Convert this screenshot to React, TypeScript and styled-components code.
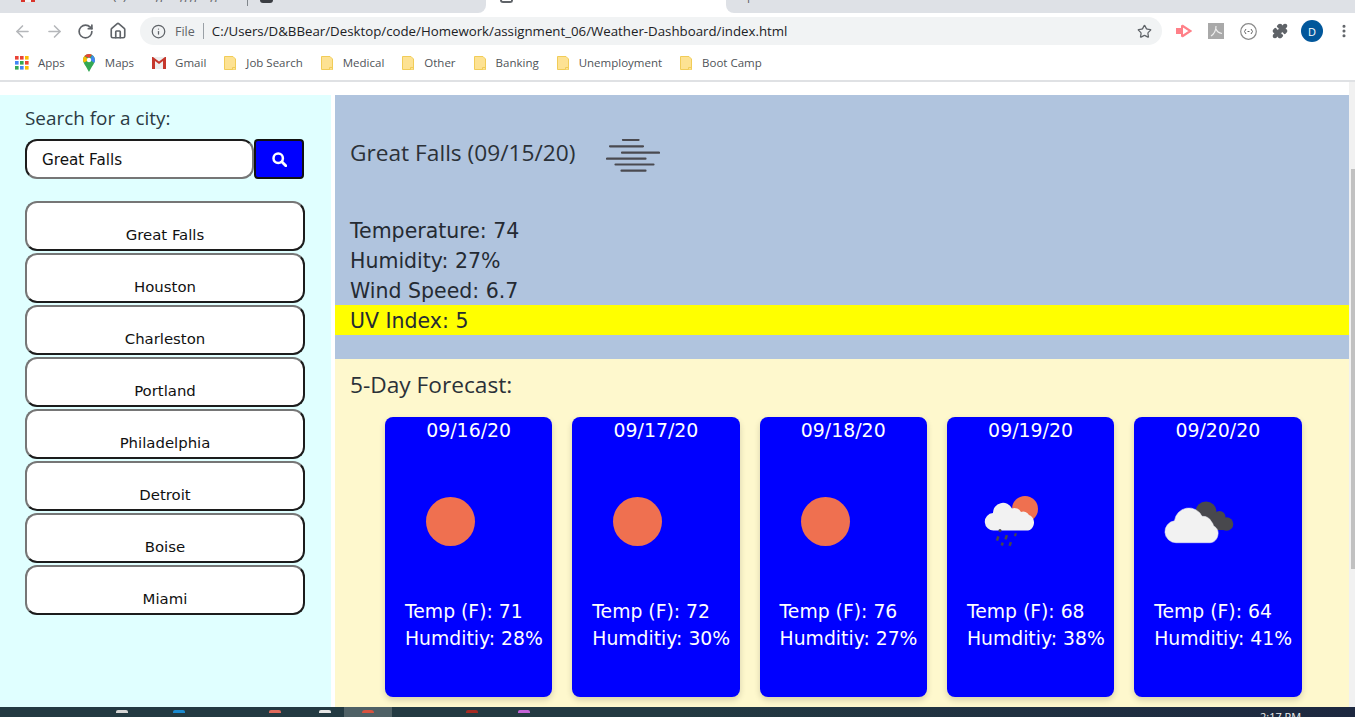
import React from "react";
import styled, { createGlobalStyle } from "styled-components";
import { ArrowLeft, ArrowRight, RotateCw, Home, Info, Star, Puzzle, EllipsisVertical } from "lucide-react";

const Global = createGlobalStyle`
  html, body { margin: 0; padding: 0; background: #fff; overflow: hidden; }
  * { box-sizing: border-box; }
`;

const Screen = styled.div`
  width: 1355px; height: 717px; display: flex; flex-direction: column; overflow: hidden;
  font-family: "Open Sans", "Liberation Sans", sans-serif;
`;

const TabStrip = styled.div`
  height: 13px; flex: none; display: flex; background: #fff; overflow: hidden;
`;
const TabGroup = styled.div<{ $w: number; $corner: string; $pad: number }>`
  width: ${p => p.$w}px; flex: none; height: 13px; background: #dee1e6;
  border-radius: ${p => p.$corner}; display: flex; align-items: flex-start; overflow: hidden;
  padding-left: ${p => p.$pad}px; font-size: 12px; color: #5f6368; line-height: 12px; white-space: nowrap;
`;
const ActiveTab = styled.div`
  flex: none; width: 240px; display: flex; padding-left: 14px;
`;
const MailGlyph = styled.i`
  display: block; flex: none; width: 14px; height: 2px; margin-right: 43px;
  background: linear-gradient(90deg, #d9342b 0 4px, #f4f4f4 4px 10px, #d9342b 10px);
`;
const GitGlyph = styled.i`
  display: block; flex: none; width: 13px; height: 3px; margin-left: 12px; background: #3a3d42; border-radius: 0 0 6px 6px;
`;
const TabTitle = styled.span`
  display: block; flex: none; width: 169px; margin-top: -10px; overflow: hidden;
`;
const TabDescender = styled.span`
  display: block; flex: none; margin-top: -10px;
`;
const Spinner = styled.i`
  display: block; width: 13px; height: 3px; border: 2px solid #5f6368; border-top: 0; border-radius: 0 0 7px 7px;
`;
const TabDivider = styled.i`
  display: block; flex: none; width: 1px; height: 6px; background: #80868b;
`;

const Toolbar = styled.div`
  height: 36px; flex: none; display: flex; align-items: center; padding-left: 13px; background: #fff;
`;
const NavBtn = styled.span<{ $c: string; $w?: number }>`
  width: ${p => p.$w ?? 32}px; flex: none; display: flex; align-items: center; color: ${p => p.$c};
  svg { display: block; }
`;
const Omnibox = styled.div`
  width: 1022px; height: 28px; border-radius: 14px; background: #f1f3f4; flex: none;
  display: flex; align-items: center; padding: 0 10px 0 11px; color: #202124;
`;
const FileLabel = styled.span`
  color: #5f6368; margin-left: 9px; font-size: 12.5px;
`;
const Sep = styled.i`
  display: block; width: 1px; height: 16px; background: #9aa0a6; margin: 0 8px 0 8px;
`;
const Url = styled.span`
  flex: 1; white-space: nowrap; font-size: 13.27px; color: #202124;
`;
const Extensions = styled.div`
  display: flex; align-items: center; margin-left: 6px; flex: none;
`;
const ExtSlot = styled.span`
  width: 32px; flex: none; display: flex; justify-content: center; align-items: center;
  svg { display: block; }
`;
const Avatar = styled.span`
  width: 22px; height: 22px; border-radius: 50%; background: #01579b; color: #fff; font-size: 11px;
  display: flex; align-items: center; justify-content: center;
`;

const Bookmarks = styled.div`
  height: 33px; flex: none; display: flex; align-items: center; padding: 0 0 4px 15px; background: #fff;
  border-bottom: 2px solid #dfe1e4; font-size: 11.5px; color: #4f5358; white-space: nowrap;
`;
const Bookmark = styled.span<{ $gap?: number }>`
  display: flex; align-items: center; gap: ${p => p.$gap ?? 10}px; margin-right: 18px;
  svg { display: block; flex: none; }
`;

const Viewport = styled.div`
  flex: 1; min-height: 0; display: flex; padding-top: 13px; background: #fff;
`;
const Sidebar = styled.aside`
  width: 331px; flex: none; background: #e0ffff; padding: 10px 0 0 25px;
`;
const SearchLabel = styled.div`
  font-size: 18.9px; line-height: 27px; color: #2b3a44;
`;
const SearchRow = styled.form`
  display: flex; margin: 7px 0 22px;
`;
const CityInput = styled.input`
  width: 229px; height: 40px; border-radius: 12px; border-style: solid; border-width: 2px;
  border-color: #1c1c1c #767676 #767676 #1c1c1c; padding: 2px 0 0 15px; background: #fff; color: #111;
  font: 15.2px "DejaVu Sans", Verdana, sans-serif; outline: none;
`;
const SearchBtn = styled.button`
  width: 50px; height: 40px; border-radius: 4px; background: #0000ff; border: 2px solid #111;
  color: #fff; display: flex; align-items: center; justify-content: center; padding: 0;
  svg { display: block; }
`;
const CityList = styled.div`
  display: flex; flex-direction: column; gap: 2px; width: 280px;
`;
const CityBtn = styled.button`
  height: 50px; border-radius: 12px; background: #fff; border-style: solid; border-width: 2px;
  border-color: #767676 #1c1c1c #1c1c1c #767676; color: #111; padding: 17px 0 0;
  font: 14.9px/20px "DejaVu Sans", Verdana, sans-serif; text-align: center;
`;

const Main = styled.main`
  width: 1014px; margin-left: 4px; flex: none; display: flex; flex-direction: column;
`;
const Hero = styled.section`
  height: 264px; flex: none; background: #b0c4de; padding-top: 41px; color: #252b33;
`;
const HeroTitle = styled.h2`
  margin: 0 0 45px 15px; height: 34px; display: flex; align-items: center; font-size: 22.7px; font-weight: 400;
  color: #2b3138; line-height: 30px; svg { margin: 5px 0 0 31px; display: block; }
`;
const Stat = styled.div<{ $bg?: string }>`
  height: 30px; padding: 1px 0 0 15px; font: 20.5px/30px "DejaVu Sans", Verdana, sans-serif;
  background: ${p => p.$bg ?? "transparent"};
`;
const Forecast = styled.section`
  flex: 1; background: #fef8cd; padding: 10px 0 0 15px;
`;
const ForecastTitle = styled.h3`
  margin: 0 0 16px; font-size: 22.7px; line-height: 32px; font-weight: 400; color: #2b3138;
`;
const Cards = styled.div`
  width: 916.5px; margin-left: 35px; display: grid; grid-template-columns: repeat(5, 1fr); gap: 20px;
`;
const Card = styled.article`
  height: 280px; background: #0000ff; border-radius: 8px; color: #fff;
  box-shadow: 0 3px 6px rgba(0,0,0,.16); font-family: "DejaVu Sans", Verdana, sans-serif;
`;
const CardDate = styled.div`
  text-align: center; font-size: 18.9px; line-height: 27px;
`;
const CardIcon = styled.svg`
  display: block; margin: 27px 0 0 15px;
`;
const CardLine = styled.div`
  font-size: 18.8px; line-height: 27px; padding-left: 20px; white-space: nowrap;
`;
const CardText = styled.div`
  margin-top: 27px;
`;

const Scrollbar = styled.div`
  flex: 1; background: #f1f1f1; margin-top: -13px; display: flex; flex-direction: column; align-items: flex-end;
  padding-top: 87px;
`;
const Thumb = styled.div`
  width: 4px; height: 400px; background: #c1c1c1;
`;

const Taskbar = styled.div`
  height: 10px; flex: none; display: flex; background: linear-gradient(90deg, #233a42 0%, #233a42 50%, #1d2840 100%);
  overflow: hidden; position: relative; color: #fff;
`;
const TaskIcon = styled.i<{ $x: number; $c: string }>`
  display: block; flex: none; width: 12px; height: 3px; margin: 3px 0 0 ${p => p.$x}px; background: ${p => p.$c}; border-radius: 2px 2px 0 0;
`;
const TaskActive = styled.div`
  width: 48px; flex: none; margin-left: 13px; background: #4f6166; display: flex; justify-content: center;
  i { display: block; width: 12px; height: 3px; margin-top: 3px; background: #d9523f; border-radius: 4px 4px 0 0; }
`;
const Clock = styled.span`
  position: absolute; left: 1260px; top: 3px; font-size: 11px; line-height: 14px; color: #eee; font-family: "Open Sans", sans-serif;
`;

const Folder = () => (
  <svg width="12" height="14" viewBox="0 0 12 14">
    <path d="M.5.5h8.5l2.500 2.500v10.500H.5z" fill="#fde293" stroke="#f1cc58" />
    <path d="M8.500 13.500v-2h3v2" fill="#fde293" stroke="#f1cc58" />
  </svg>
);

const AppsGrid = () => {
  const colors = ["#ea4335", "#ea4335", "#fbbc04", "#4285f4", "#34a853", "#ea4335", "#34a853", "#4285f4", "#fbbc04"];
  return (
    <svg width="14" height="14" viewBox="0 0 14 14">
      {colors.map((c, i) => (
        <rect key={i} x={(i % 3) * 5} y={Math.floor(i / 3) * 5} width="3.6" height="3.6" fill={c} />
      ))}
    </svg>
  );
};

const MapsPin = () => (
  <svg width="12" height="18" viewBox="0 0 12 18">
    <path d="M6 0a6 6 0 0 1 6 6c0 3-3 6-6 12C3 12 0 9 0 6a6 6 0 0 1 6-6z" fill="#34a853" />
    <path d="M1.500 2 6 6 1 8.500C.3 7.500 0 6.800 0 6c0-1.500.6-3 1.500-4z" fill="#fbbc04" />
    <path d="M1.500 2A6 6 0 0 1 6 0c1.200 0 2.200.3 3 1L6 4z" fill="#ea4335" />
    <path d="M9 1a6 6 0 0 1 3 5c0 1-.3 2-.8 3L7.500 6z" fill="#4285f4" />
    <circle cx="6" cy="6" r="2.200" fill="#fff" />
  </svg>
);

const GmailIcon = () => (
  <svg width="14" height="12" viewBox="0 0 14 12">
    <rect width="14" height="12" fill="#eee" />
    <path d="M0 0v12h3V4l4 3 4-3v8h3V0h-1L7 4.500 1 0z" fill="#c5372c" />
  </svg>
);

const MistIcon = () => (
  <svg width="54" height="34" viewBox="606 139 54 34" stroke="#4a4a50" strokeWidth="2.200" strokeLinecap="round">
    <path d="M623 140h15.500M610 146.300h33M622 152.700h37M607 158.700h38.500M615.500 164.500h38M621.500 170.700h24" />
  </svg>
);

const IconFrame = ({ children }: { children: React.ReactNode }) => (
  <CardIcon width="100" height="100" viewBox="0 0 100 100">{children}</CardIcon>
);

const Sun = () => (
  <IconFrame>
    <circle cx="50.500" cy="50.500" r="24.500" fill="#ef7050" />
  </IconFrame>
);

const RainSun = () => (
  <IconFrame>
    <circle cx="63" cy="38" r="13" fill="#ef7050" />
    <path
      d="M32 59.500a8.700 8.700 0 0 1-1-17.400 10 10 0 0 1 19-4.600 7.500 7.500 0 0 1 9 3.500 6.500 6.500 0 0 1 8 3c3 1 5 4 5 7.500 0 4-3 8-6 8z"
      fill="#f2f2f2"
    />
    <g fill="#47474c">
      <circle cx="38" cy="59.500" r="1.500" />
      <rect x="34.500" y="65" width="2.500" height="4.500" transform="rotate(18 35 67)" />
      <rect x="43" y="64" width="2.500" height="4.500" transform="rotate(18 44 66)" />
      <rect x="52.500" y="62" width="2.200" height="3" transform="rotate(18 53 63)" />
      <rect x="39" y="71.500" width="2.500" height="3" transform="rotate(18 40 73)" />
      <rect x="47" y="71" width="2.500" height="4" transform="rotate(18 48 73)" />
    </g>
  </IconFrame>
);

const CloudIcon = () => (
  <IconFrame>
    <g fill="#48484d">
      <circle cx="57" cy="41" r="10.500" />
      <circle cx="70.500" cy="46" r="6" />
      <circle cx="77.500" cy="53" r="6.800" />
      <rect x="55" y="44" width="20" height="15" />
    </g>
    <path
      d="M27 71.700a11 11 0 0 1-1.500-21.900 14.500 14.500 0 0 1 27.500-4.500 10 10 0 0 1 9.500 5.500 8.500 8.500 0 0 1 2 4c3.500 2 5 5 4.500 8.500-.5 5-4 8.400-8 8.400z"
      fill="#f2f2f2"
      stroke="#e8e8f0"
      strokeWidth=".6"
    />
  </IconFrame>
);

const cities = ["Great Falls", "Houston", "Charleston", "Portland", "Philadelphia", "Detroit", "Boise", "Miami"];

const days = [
  { date: "09/16/20", temp: 71, hum: 28, icon: <Sun /> },
  { date: "09/17/20", temp: 72, hum: 30, icon: <Sun /> },
  { date: "09/18/20", temp: 76, hum: 27, icon: <Sun /> },
  { date: "09/19/20", temp: 68, hum: 38, icon: <RainSun /> },
  { date: "09/20/20", temp: 64, hum: 41, icon: <CloudIcon /> },
];

const marks: { label: string; icon: React.ReactNode; gap?: number }[] = [
  { label: "Apps", icon: <AppsGrid />, gap: 9 },
  { label: "Maps", icon: <MapsPin /> },
  { label: "Gmail", icon: <GmailIcon />, gap: 9 },
  { label: "Job Search", icon: <Folder /> },
  { label: "Medical", icon: <Folder /> },
  { label: "Other", icon: <Folder /> },
  { label: "Banking", icon: <Folder /> },
  { label: "Unemployment", icon: <Folder /> },
  { label: "Boot Camp", icon: <Folder /> },
];

export default function App() {
  return (
    <Screen>
      <Global />
      <TabStrip>
        <TabGroup $w={486} $corner="0 0 8px 0" $pad={21}>
          <MailGlyph />
          <TabTitle>Inbox (1) - weighing gauge</TabTitle>
          <TabDivider />
          <GitGlyph />
        </TabGroup>
        <ActiveTab><Spinner /></ActiveTab>
        <TabGroup $w={629} $corner="0 0 0 8px" $pad={21}>
          <TabDescender>p</TabDescender>
        </TabGroup>
      </TabStrip>

      <Toolbar>
        <NavBtn $c="#b5b7ba"><ArrowLeft size={19} strokeWidth={2} /></NavBtn>
        <NavBtn $c="#b5b7ba"><ArrowRight size={19} strokeWidth={2} /></NavBtn>
        <NavBtn $c="#5f6368"><RotateCw size={17} strokeWidth={2.4} /></NavBtn>
        <NavBtn $c="#5f6368" $w={31}><Home size={18} strokeWidth={2.2} /></NavBtn>
        <Omnibox>
          <Info size={15} color="#5f6368" strokeWidth={2} />
          <FileLabel>File</FileLabel>
          <Sep />
          <Url>C:/Users/D&amp;BBear/Desktop/code/Homework/assignment_06/Weather-Dashboard/index.html</Url>
          <Star size={15} color="#5f6368" strokeWidth={2} />
        </Omnibox>
        <Extensions>
          <ExtSlot>
            <svg width="16" height="14" viewBox="0 0 16 14">
              <path d="M0 4h5V1l2 1v10l-2 1v-3H0z" fill="#ff8088" />
              <path d="M6 1.500 14.500 7 6 12.500" fill="none" stroke="#ff8088" strokeWidth="2.200" />
            </svg>
          </ExtSlot>
          <ExtSlot>
            <svg width="16" height="16" viewBox="0 0 16 16">
              <rect width="16" height="16" fill="#a9a9a9" />
              <path d="M3 13c3-2 5-6 5-10M8 6c1 3 3 4 6 4.500" fill="none" stroke="#eee" strokeWidth="1.200" />
            </svg>
          </ExtSlot>
          <ExtSlot>
            <svg width="17" height="17" viewBox="0 0 17 17">
              <circle cx="8.500" cy="8.500" r="7.800" fill="none" stroke="#8a8a8a" strokeWidth="1.200" />
              <path d="M6 6 4.500 8.500 6 11M11 6l1.500 2.500L11 11M7.500 8.500h2" fill="none" stroke="#666" strokeWidth="1" />
            </svg>
          </ExtSlot>
          <ExtSlot><Puzzle size={16} fill="#5f6368" color="#5f6368" /></ExtSlot>
          <ExtSlot><Avatar>D</Avatar></ExtSlot>
          <ExtSlot><EllipsisVertical size={16} color="#5f6368" strokeWidth={2.6} /></ExtSlot>
        </Extensions>
      </Toolbar>

      <Bookmarks>
        {marks.map(m => (
          <Bookmark key={m.label} $gap={m.gap}>
            {m.icon}
            {m.label}
          </Bookmark>
        ))}
      </Bookmarks>

      <Viewport>
        <Sidebar>
          <SearchLabel>Search for a city:</SearchLabel>
          <SearchRow onSubmit={e => e.preventDefault()}>
            <CityInput defaultValue="Great Falls" />
            <SearchBtn type="button" aria-label="Search">
              <svg width="15" height="15" viewBox="0 0 15 15" fill="none" stroke="#fff">
                <circle cx="6.200" cy="6.200" r="4.700" strokeWidth="2.500" />
                <path d="M10 10l3.800 3.800" strokeWidth="2.800" strokeLinecap="round" />
              </svg>
            </SearchBtn>
          </SearchRow>
          <CityList>
            {cities.map(c => <CityBtn key={c} type="button">{c}</CityBtn>)}
          </CityList>
        </Sidebar>
        <Main>
          <Hero>
            <HeroTitle>Great Falls (09/15/20)<MistIcon /></HeroTitle>
            <Stat>Temperature: 74</Stat>
            <Stat>Humidity: 27%</Stat>
            <Stat>Wind Speed: 6.7</Stat>
            <Stat $bg="#ffff00">UV Index: 5</Stat>
          </Hero>
          <Forecast>
            <ForecastTitle>5-Day Forecast:</ForecastTitle>
            <Cards>
              {days.map(d => (
                <Card key={d.date}>
                  <CardDate>{d.date}</CardDate>
                  {d.icon}
                  <CardText>
                    <CardLine>Temp (F): {d.temp}</CardLine>
                    <CardLine>Humditiy: {d.hum}%</CardLine>
                  </CardText>
                </Card>
              ))}
            </Cards>
          </Forecast>
        </Main>
        <Scrollbar><Thumb /></Scrollbar>
      </Viewport>

      <Taskbar>
        <TaskIcon $x={116} $c="#d5d5d5" />
        <TaskIcon $x={45} $c="#1a8ad0" />
        <TaskIcon $x={84} $c="#e06a5c" />
        <TaskIcon $x={38} $c="#e5e5e5" />
        <TaskActive><i /></TaskActive>
        <TaskIcon $x={74} $c="#a52a22" />
        <TaskIcon $x={40} $c="#c463d8" />
        <Clock>2:17 PM</Clock>
      </Taskbar>
    </Screen>
  );
}
